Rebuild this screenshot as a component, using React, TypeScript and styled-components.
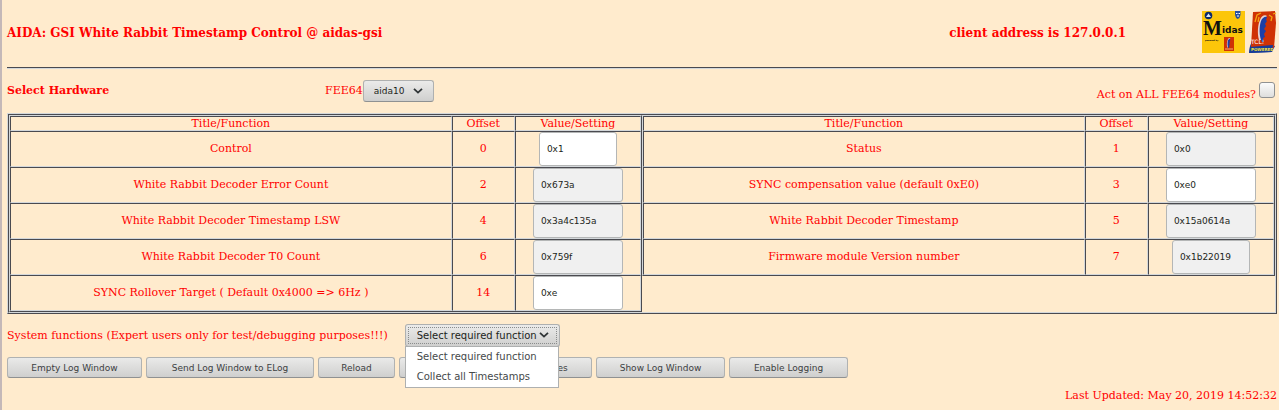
import React from 'react';
import styled, { createGlobalStyle } from 'styled-components';

const serif = '"DejaVu Serif", serif';
const sans = '"DejaVu Sans", sans-serif';
const dark = '#4a4a50';
const light = '#d3d7da';

const Global = createGlobalStyle`
  * { box-sizing: border-box; }
  body { margin: 0; background: #ffebcd; overflow: hidden; }
`;

const Page = styled.main`
  border-left: 2px solid #c4b8b8;
  padding: 8px 2px 9px 5px;
  background: #ffebcd;
  color: #ff0000;
  font: 11px/14px ${serif};
`;

const Header = styled.header`
  display: flex;
  align-items: center;
  height: 50px;
`;

const Title = styled.h1`
  margin: 0;
  flex: 1;
  font-size: 12px;
  line-height: 16px;
`;

const Client = styled.h2`
  margin: 0 76px 0 0;
  font-size: 12px;
  line-height: 16px;
`;

const Logos = styled.div`
  display: flex;
  gap: 4px;
  padding-bottom: 2px;
  svg { display: block; }
`;

const Rule = styled.hr`
  margin: 9px 0 11px;
  border: 0;
  border-top: 1px solid ${dark};
  border-bottom: 1px solid ${light};
`;

const Hardware = styled.section`
  display: grid;
  grid-template-columns: 318px 1fr auto;
  align-items: start;
  height: 33px;
`;

const SectionTitle = styled.h3`
  margin: 4px 0 0;
  font-size: 11px;
  line-height: 14px;
`;

const Field = styled.div`
  display: flex;
  align-items: center;
`;

const SelectWrap = styled.div`
  position: relative;
  svg {
    position: absolute;
    right: 11px;
    top: 7px;
    pointer-events: none;
  }
`;

const Select = styled.select<{ $wide?: boolean }>`
  appearance: none;
  display: block;
  width: ${p => (p.$wide ? 155 : 71)}px;
  height: ${p => (p.$wide ? 23 : 22)}px;
  padding: 0 10px;
  border: 1px solid #aeb0b0;
  border-bottom-color: #8f9192;
  border-radius: 3px;
  background: linear-gradient(#ebebea, #cfcfce);
  color: #1c1f20;
  font: ${p => (p.$wide ? 10 : 9)}px ${sans};
  ${p => p.$wide && 'outline: 1px dotted #8a8c8c; outline-offset: -4px; padding-left: 11px;'}
`;

const CheckLabel = styled.label`
  display: flex;
  align-items: flex-start;
  gap: 3px;
  padding: 2px 2px 0 0;
  span { padding-top: 6px; }
`;

const Check = styled.input`
  appearance: none;
  width: 16px;
  height: 16px;
  margin: 0;
  border: 1px solid #8f9192;
  border-radius: 3px;
  background: linear-gradient(#fbfbfb, #dededd);
`;

const Outer = styled.section`
  border: 1px solid;
  border-color: ${light} ${dark} ${dark} ${light};
`;

const Inner = styled.div`
  display: flex;
  align-items: flex-start;
  border: 1px solid;
  border-color: ${dark} ${light} ${light} ${dark};
`;

const Table = styled.table`
  flex: 1 1 0;
  width: 50%;
  table-layout: fixed;
  border-collapse: separate;
  border-spacing: 0;
  border: 1px solid;
  border-color: ${light} ${dark} ${dark} ${light};
  text-align: center;
`;

const Head = styled.th<{ $w: number }>`
  width: ${p => p.$w}%;
  height: 15px;
  padding: 0;
  border: 1px solid;
  border-color: ${dark} ${light} ${light} ${dark};
  font-weight: normal;
  line-height: 13px;
`;

const Cell = styled.td`
  height: 36px;
  padding: 0;
  border: 1px solid;
  border-color: ${dark} ${light} ${light} ${dark};
`;

const Value = styled.input<{ $narrow?: boolean }>`
  display: block;
  width: ${p => (p.$narrow ? 78 : 90)}px;
  height: 34px;
  margin: 0 auto;
  padding: 0 7px;
  border: 1px solid #b4b6b6;
  border-radius: 3px;
  background: ${p => (p.readOnly ? '#f0f0f0' : '#ffffff')};
  color: #1c1f20;
  font: 9px ${sans};
`;

const System = styled.section`
  display: flex;
  align-items: center;
  gap: 17px;
  margin-top: 10px;
`;

const Menu = styled.ul`
  position: absolute;
  z-index: 1;
  top: 22px;
  left: 0;
  width: 154px;
  margin: 0;
  padding: 0 11px;
  list-style: none;
  border: 1px solid #aeb0b0;
  background: #ffffff;
  color: #45494a;
  font: 10px/20px ${sans};
`;

const Buttons = styled.div`
  display: flex;
  gap: 4px;
  margin-top: 10px;
`;

const Button = styled.button<{ $w: number }>`
  width: ${p => p.$w}px;
  height: 21px;
  padding: 0;
  border: 1px solid #b0b2b2;
  border-bottom-color: #8f9192;
  border-radius: 3px;
  background: linear-gradient(#eaeae9, #cfcfce);
  color: #3c4042;
  font: 9px ${sans};
  text-align: center;
`;

const Updated = styled.footer`
  margin-top: 11px;
  text-align: right;
`;

type Row = { title: string; offset: number; value: string; editable?: boolean; narrow?: boolean };

const left: Row[] = [
  { title: 'Control', offset: 0, value: '0x1', editable: true, narrow: true },
  { title: 'White Rabbit Decoder Error Count', offset: 2, value: '0x673a' },
  { title: 'White Rabbit Decoder Timestamp LSW', offset: 4, value: '0x3a4c135a' },
  { title: 'White Rabbit Decoder T0 Count', offset: 6, value: '0x759f' },
  { title: 'SYNC Rollover Target ( Default 0x4000 => 6Hz )', offset: 14, value: '0xe', editable: true },
];

const right: Row[] = [
  { title: 'Status', offset: 1, value: '0x0' },
  { title: 'SYNC compensation value (default 0xE0)', offset: 3, value: '0xe0', editable: true },
  { title: 'White Rabbit Decoder Timestamp', offset: 5, value: '0x15a0614a' },
  { title: 'Firmware module Version number', offset: 7, value: '0x1b22019', narrow: true },
];

const buttons: [string, number][] = [
  ['Empty Log Window', 135],
  ['Send Log Window to ELog', 168],
  ['Reload', 77],
  ['Reset', 72],
  ['Show Variables', 117],
  ['Show Log Window', 129],
  ['Enable Logging', 119],
];

const Registers = ({ rows }: { rows: Row[] }) => (
  <Table>
    <thead>
      <tr>
        <Head $w={70}>Title/Function</Head>
        <Head $w={10}>Offset</Head>
        <Head $w={20}>Value/Setting</Head>
      </tr>
    </thead>
    <tbody>
      {rows.map(r => (
        <tr key={r.offset}>
          <Cell>{r.title}</Cell>
          <Cell>{r.offset}</Cell>
          <Cell>
            <Value aria-label={r.title} defaultValue={r.value} readOnly={!r.editable} $narrow={r.narrow} />
          </Cell>
        </tr>
      ))}
    </tbody>
  </Table>
);

const Chevron = () => (
  <svg width="10" height="8" viewBox="0 0 10 8" aria-hidden="true">
    <path d="M1 1.8 L5 5.6 L9 1.8" fill="none" stroke="#2f3436" strokeWidth="1.8" />
  </svg>
);

const Feather = () => (
  <>
    <path d="M10 29 C8 22 9 13 11 9 C12 5 16 3 18 5 L16 7 L14 9 L13 16 L13 29 Z" fill="#e9d3cf" />
    <path d="M13 31 C10 26 10 15 12 10 C13 7 16 5 18 6 L17 9 L18 10 L16 13 L17 15 L15 18 L17 20 L15 23 L16 26 L14 27 L15 31 Z" fill="#1c3fa8" />
  </>
);

const MidasLogo = () => (
  <svg width="43" height="42" viewBox="0 0 43 42" role="img" aria-label="Midas">
    <rect width="43" height="42" fill="#fcc60a" />
    <circle cx="6.5" cy="4.5" r="3.8" fill="#0c2a6a" />
    <path d="M4 6 L6.500 2.500 L9 6 Z" fill="#dfe8f5" />
    <path d="M33 0 H38.500 V4 Q38 7 35.700 8 Q33.500 7 33 4 Z" fill="#2a50a0" />
    <path d="M34 2.500 H35.500 M36.500 2.500 H38 M35 5 H37" stroke="#fff" />
    <text x="1" y="24" fontFamily="Liberation Serif" fontWeight="bold" fontSize="20" fill="#111">M</text>
    <text x="20" y="22" fontFamily="DejaVu Sans" fontWeight="bold" fontSize="9" fill="#111">idas</text>
    <text x="3" y="30" fontFamily="DejaVu Sans" fontWeight="bold" fontSize="2" fill="#111">powered by</text>
    <rect x="22" y="26" width="10" height="14" fill="#cf3205" />
    <g transform="translate(21.500 25.500) scale(.38)"><Feather /></g>
    <path d="M23 38 H31" stroke="#f0b070" />
  </svg>
);

const TclLogo = () => (
  <svg width="28" height="42" viewBox="0 0 28 42" role="img" aria-label="Tcl powered">
    <path d="M1 35 L4 28 L26 35 L23 41 L0 42 Z" fill="#173c98" />
    <path d="M4 1 L26 0 L27 12 L25 37 L2 36 Z" fill="#cf3205" />
    <Feather />
    <path d="M6 11 L8 4 L12 2 M9 11 L10 6 M20 4 L23 6 L22 10 M24 3 L27 2" fill="none" stroke="#f5a410" strokeWidth="1.3" />
    <text x="2" y="33" fontFamily="DejaVu Sans" fontSize="6" fill="#fff">TCL!</text>
    <path d="M1 36 L24 34 L23 41 L0 42 Z" fill="#173c98" />
    <text x="2" y="40" fontFamily="DejaVu Sans" fontWeight="bold" fontSize="4" fill="#f7e33c">POWERED</text>
  </svg>
);

export default function App() {
  return (
    <>
      <Global />
      <Page>
        <Header>
          <Title>AIDA: GSI White Rabbit Timestamp Control @ aidas-gsi</Title>
          <Client>client address is 127.0.0.1</Client>
          <Logos>
            <MidasLogo />
            <TclLogo />
          </Logos>
        </Header>
        <Rule />
        <Hardware>
          <SectionTitle>Select Hardware</SectionTitle>
          <Field>
            <label htmlFor="fee">FEE64</label>
            <SelectWrap>
              <Select id="fee"><option>aida10</option></Select>
              <Chevron />
            </SelectWrap>
          </Field>
          <CheckLabel>
            <span>Act on ALL FEE64 modules?</span>
            <Check type="checkbox" />
          </CheckLabel>
        </Hardware>
        <Outer>
          <Inner>
            <Registers rows={left} />
            <Registers rows={right} />
          </Inner>
        </Outer>
        <System>
          <label htmlFor="fn">System functions (Expert users only for test/debugging purposes!!!)</label>
          <SelectWrap>
            <Select id="fn" $wide>
              <option>Select required function</option>
              <option>Collect all Timestamps</option>
            </Select>
            <Chevron />
            <Menu>
              <li>Select required function</li>
              <li>Collect all Timestamps</li>
            </Menu>
          </SelectWrap>
        </System>
        <Buttons>
          {buttons.map(([label, w]) => <Button key={label} type="button" $w={w}>{label}</Button>)}
        </Buttons>
        <Updated>Last Updated: May 20, 2019 14:52:32</Updated>
      </Page>
    </>
  );
}
